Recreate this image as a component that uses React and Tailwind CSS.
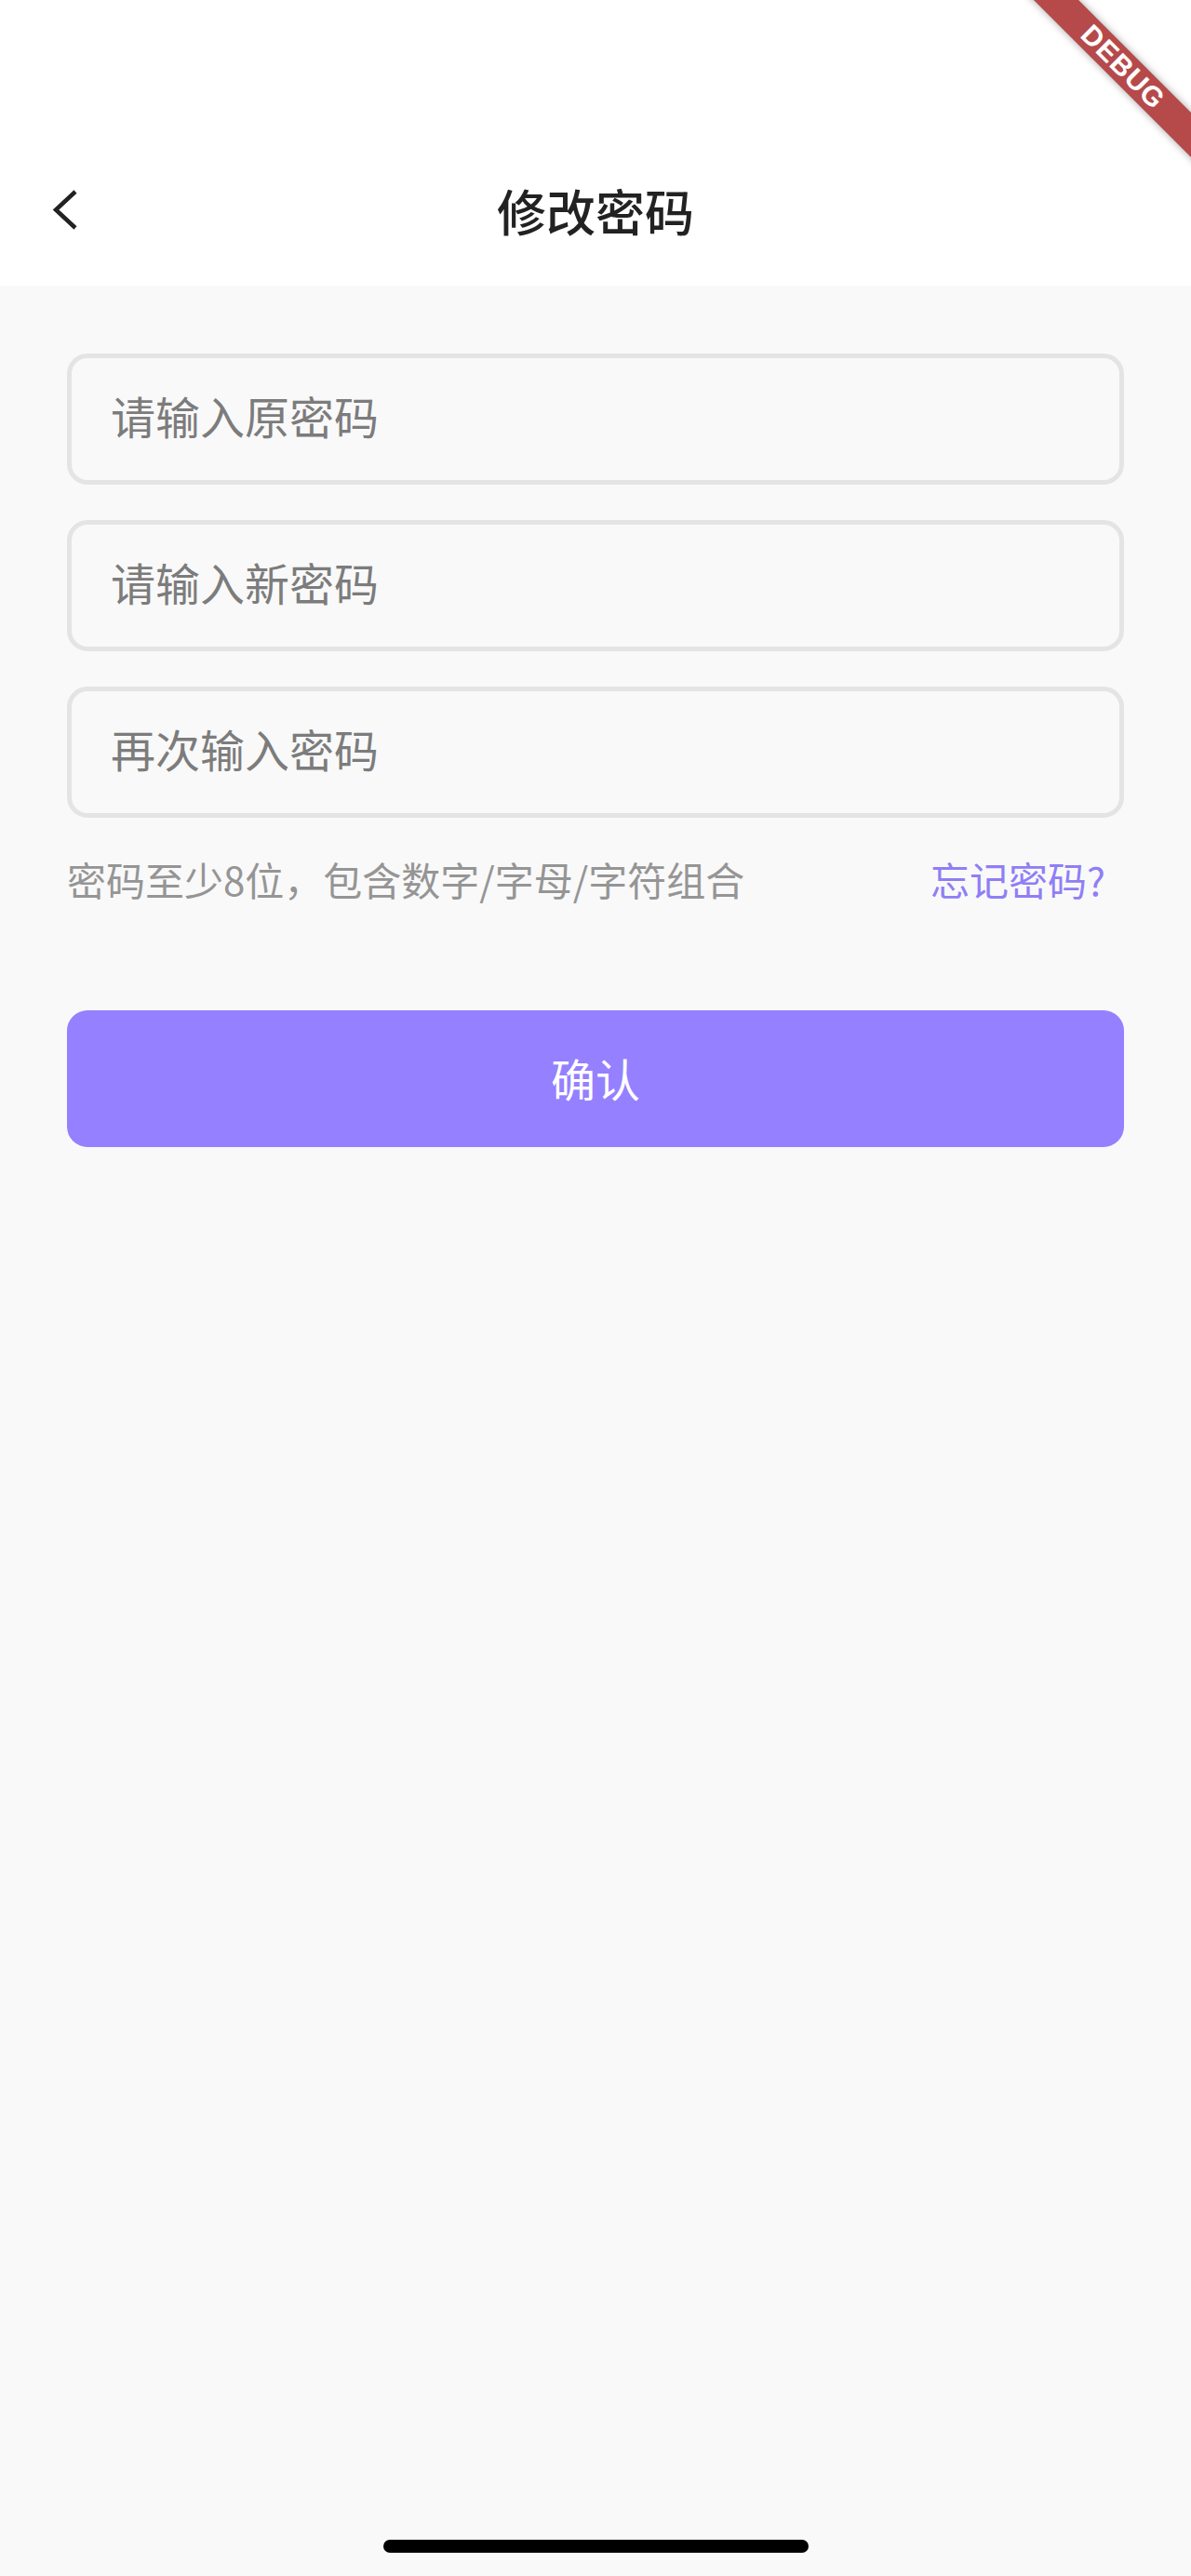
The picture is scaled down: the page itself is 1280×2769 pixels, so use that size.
import { useState } from 'react';

const cjk = { fontFamily: '"Noto Sans CJK SC", "Noto Sans", sans-serif' };

function DebugBanner() {
  return (
    <div className="pointer-events-none absolute right-0 top-0 h-[200px] w-[200px] overflow-hidden">
      <div
        className="absolute left-[-23px] top-[55px] flex h-[34px] w-[300px] rotate-45 items-center justify-center bg-[#b64a4a] shadow-[0_0_8px_rgba(0,0,0,0.35)]"
        style={{ fontFamily: '"Liberation Sans", Arial, sans-serif' }}
      >
        <span className="text-[30px] font-black leading-none tracking-[1px] text-white">DEBUG</span>
      </div>
    </div>
  );
}

export default function App() {
  const [oldPwd, setOldPwd] = useState('');
  const [newPwd, setNewPwd] = useState('');
  const [again, setAgain] = useState('');

  const inputClass =
    'block h-[141px] w-full rounded-[22px] border-[5px] border-[#e4e4e4] bg-transparent pb-[10px] pl-[42px] pr-[30px] text-[48px] text-[#222] placeholder:text-[#7c7c7c] focus:outline-none';

  return (
    <div className="relative flex min-h-[2769px] flex-col bg-[#f9f9f9]" style={cjk}>
      {/* header */}
      <div className="bg-white pt-[145px]">
        <div className="grid h-[162px] grid-cols-[1fr_auto_1fr] items-center">
          <button className="flex items-center justify-start pl-[56px]">
            <svg width="28" height="44" viewBox="0 0 28 44" fill="none">
              <polyline points="25,2 4,21.5 25,41" stroke="#222" strokeWidth="4.5" strokeLinejoin="miter" />
            </svg>
          </button>
          <h1 className="text-[53px] font-medium leading-none text-[#222]">修改密码</h1>
          <div />
        </div>
      </div>

      {/* form */}
      <div className="px-[72px] pt-[73px]">
        <div className="flex flex-col gap-[38px]">
          <input type="password" placeholder="请输入原密码" value={oldPwd}
            onChange={e => setOldPwd(e.target.value)} className={inputClass} style={cjk} />
          <input type="password" placeholder="请输入新密码" value={newPwd}
            onChange={e => setNewPwd(e.target.value)} className={inputClass} style={cjk} />
          <input type="password" placeholder="再次输入密码" value={again}
            onChange={e => setAgain(e.target.value)} className={inputClass} style={cjk} />
        </div>

        <div className="mt-[36px] flex h-[60px] items-center justify-between pr-[20px]">
          <p className="text-[42px] leading-none text-[#959595]">密码至少8位，包含数字/字母/字符组合</p>
          <button className="text-[42px] leading-none text-[#8f7ef6]">忘记密码?</button>
        </div>

        <button className="mt-[111px] flex h-[147px] w-full items-center justify-center rounded-[22px] bg-[#9580ff] pb-[4px] text-[48px] text-white">
          确认
        </button>
      </div>

      <div className="flex-1" />

      {/* home indicator */}
      <div className="mb-[25px] flex justify-center">
        <div className="h-[14px] w-[457px] rounded-full bg-black" />
      </div>

      <DebugBanner />
    </div>
  );
}
